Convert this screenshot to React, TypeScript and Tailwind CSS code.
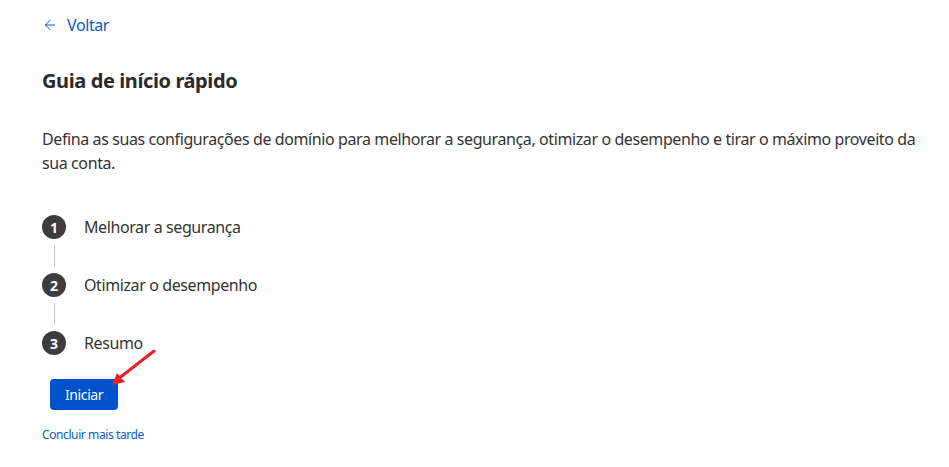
import { ArrowLeft } from 'lucide-react';

const steps = ['Melhorar a segurança', 'Otimizar o desempenho', 'Resumo'];

function StepBadge({ n }: { n: number }) {
  return (
    <span className="flex h-6 w-6 shrink-0 items-center justify-center rounded-full bg-[#3d3d3d] text-[14px] font-bold tracking-normal text-white">
      {n}
    </span>
  );
}

export default function App() {
  return (
    <div className="min-h-[467px] bg-white pl-[42px] pr-[24px] font-['Noto_Sans',sans-serif] tracking-[-0.4px] text-[#333]">
      {/* Back link */}
      <a href="#" className="flex items-center gap-[9px] pt-[13px] text-[16px] text-[#0b5cc8]">
        <ArrowLeft size={16} strokeWidth={1.5} />
        <span>Voltar</span>
      </a>

      <h1 className="mt-[30px] text-[20px] font-bold leading-[28px] text-[#2b2b2b]">
        Guia de início rápido
      </h1>

      <p className="mt-[32px] text-[16px] leading-[24px]">
        Defina as suas configurações de domínio para melhorar a segurança, otimizar o desempenho e tirar o máximo proveito da sua conta.
      </p>

      {/* Steps */}
      <ol className="mt-[40px] flex flex-col">
        {steps.map((label, i) => (
          <li key={label} className="flex flex-col">
            <div className="flex items-center gap-[18px]">
              <StepBadge n={i + 1} />
              <span className="text-[16px] leading-[24px]">{label}</span>
            </div>
            {i < steps.length - 1 && (
              <div className="my-[6px] ml-[12px] h-[22px] w-px bg-[#c8c8c8]" />
            )}
          </li>
        ))}
      </ol>

      <div className="relative mt-[24px] ml-[8px] w-fit">
        <button className="h-[31px] rounded-[4px] bg-[#0052cc] px-[15px] text-[14px] font-normal text-white">
          Iniciar
        </button>
        {/* annotation arrow */}
        <svg
          className="absolute left-[58px] top-[-30px]"
          width="50"
          height="40"
          viewBox="0 0 50 40"
        >
          <line x1="46" y1="2" x2="10" y2="30" stroke="#e8202a" strokeWidth="3" strokeLinecap="round" />
          <polygon points="4,36 9,24 17,33" fill="#e8202a" />
        </svg>
      </div>

      <a href="#" className="mt-[16px] block text-[12px] text-[#0b5cc8]">
        Concluir mais tarde
      </a>
    </div>
  );
}
